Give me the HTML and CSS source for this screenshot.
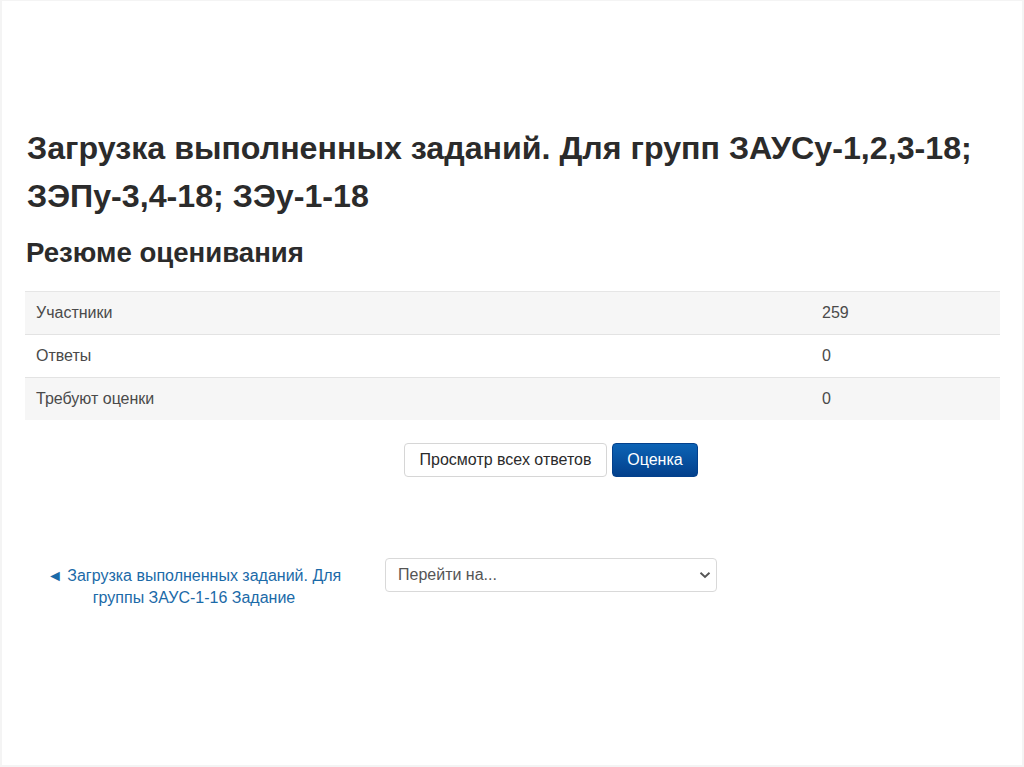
FILE: index.html
```html
<!DOCTYPE html>
<html lang="ru">
<head>
<meta charset="utf-8">
<title>Резюме оценивания</title>
<link rel="stylesheet" href="styles.css">
</head>
<body>
<div class="frame">
  <main class="content">
    <h2 class="title">Загрузка выполненных заданий. Для групп ЗАУСу-1,2,3-18; ЗЭПу-3,4-18; ЗЭу-1-18</h2>
    <h3 class="subtitle">Резюме оценивания</h3>
    <div class="summary">
      <div class="row odd"><span class="label">Участники</span><span class="value">259</span></div>
      <div class="row"><span class="label">Ответы</span><span class="value">0</span></div>
      <div class="row odd"><span class="label">Требуют оценки</span><span class="value">0</span></div>
    </div>
    <div class="actions">
      <button class="btn btn-secondary">Просмотр всех ответов</button>
      <button class="btn btn-primary">Оценка</button>
    </div>
    <nav class="activity-nav">
      <a class="prev-link" href="#"><span class="line1">◄ Загрузка выполненных заданий. Для</span><span class="line2">группы ЗАУС-1-16 Задание</span></a>
      <div class="jump">
        <span class="jump-text">Перейти на...</span>
        <svg class="chev" width="12" height="8" viewBox="0 0 12 8"><path d="M1.5 1.8 L6 6 L10.5 1.8" fill="none" stroke="#555" stroke-width="1.9"/></svg>
      </div>
    </nav>
  </main>
</div>
</body>
</html>
```

FILE: styles.css
```css
html, body {
  margin: 0;
  padding: 0;
  background: #ffffff;
}
body {
  font-family: "Liberation Sans", Arial, sans-serif;
  color: #373a3c;
}
.frame {
  width: 1024px;
  height: 767px;
  box-sizing: border-box;
  border: 2px solid #f4f4f4;
  border-top-width: 1px;
  overflow: hidden;
}
.content {
  padding: 0 0 0 23px;
  width: 975px;
}
.title {
  margin: 123px 0 0 2px;
  font-size: 32.2px;
  line-height: 48px;
  font-weight: bold;
  color: #2b2b2b;
  width: 965px;
}
.subtitle {
  margin: 15px 0 0 1px;
  font-size: 27.6px;
  line-height: 36px;
  font-weight: bold;
  color: #2b2b2b;
}
.summary {
  margin-top: 20px;
  border-top: 1px solid #e6e6e6;
}
.row {
  display: grid;
  grid-template-columns: 786px 1fr;
  height: 42px;
  align-items: center;
  border-bottom: 1px solid #e3e3e3;
  font-size: 16px;
  color: #4a4a4a;
}
.row.odd {
  background: #f6f6f6;
}
.row:last-child {
  border-bottom: none;
}
.label {
  padding-left: 11px;
}
.value {
  padding-left: 11px;
}
.actions {
  display: flex;
  gap: 5px;
  margin: 23px 0 0 379px;
}
.btn {
  font-family: "Liberation Sans", Arial, sans-serif;
  font-size: 16px;
  height: 34px;
  border-radius: 4px;
  padding: 0;
  cursor: pointer;
}
.btn-secondary {
  width: 203px;
  background: #ffffff;
  border: 1px solid #d6d6d6;
  color: #2b2b2b;
}
.btn-primary {
  width: 86px;
  background: linear-gradient(#0c63b5, #03408c);
  border: 1px solid #03408c;
  color: #ffffff;
}
.activity-nav {
  display: flex;
  align-items: flex-start;
  margin-top: 81px;
}
.prev-link {
  width: 294px;
  margin-left: 22px;
  margin-right: 44px;
  margin-top: 7px;
  font-size: 16px;
  line-height: 22px;
  color: #1b6aa8;
  text-decoration: none;
  text-align: center;
}
.line1, .line2 {
  display: block;
  white-space: nowrap;
}
.jump {
  width: 332px;
  height: 34px;
  box-sizing: border-box;
  border: 1px solid #d9d9d9;
  border-radius: 4px;
  display: flex;
  align-items: center;
  justify-content: space-between;
  padding: 0 5px 0 12px;
  font-size: 16px;
  color: #555;
}
.chev {
  display: block;
}
```
